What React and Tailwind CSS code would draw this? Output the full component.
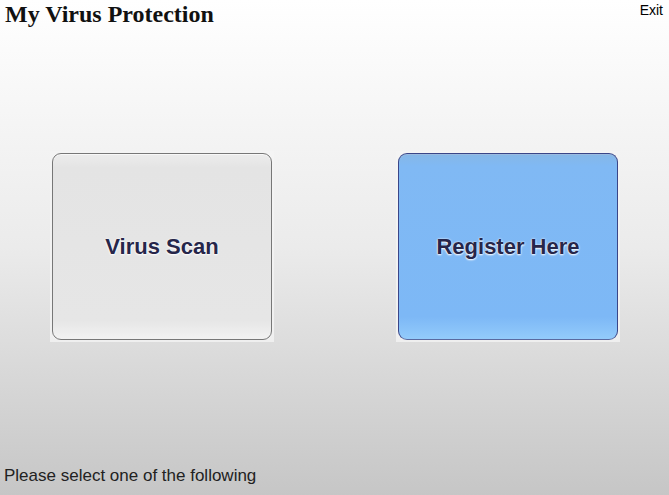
export default function App() {
    return (
        <div className="flex flex-col h-[495px] w-[669px] bg-gradient-to-b from-white via-[#ebebeb] to-[#c6c6c6] text-black overflow-hidden">
            {/* Header */}
            <header className="flex justify-between items-start">
                <h1 className="pl-[5px] text-[24px] leading-[28px] font-bold font-['Liberation_Serif',serif] text-[#111]">
                    My Virus Protection
                </h1>
                <button className="pr-[6px] pt-[2px] text-[14px] leading-[16px] font-['Liberation_Sans',Arial,sans-serif]">
                    Exit
                </button>
            </header>

            {/* Buttons */}
            <main className="flex justify-between pl-[50px] pr-[49px] mt-[123px]">
                <Tile variant="gray">Virus Scan</Tile>
                <Tile variant="blue">Register Here</Tile>
            </main>

            <footer className="mt-auto pl-[4px] pb-[9px] text-[17px] leading-[21px] text-[#222] font-['Liberation_Sans',Arial,sans-serif]">
                Please select one of the following
            </footer>
        </div>
    );
}

function Tile({ variant, children }) {
    const blue = variant === "blue";
    return (
        <div className="p-[2px] bg-[#f4f4f4]/80">
            <button
                className={`w-[220px] h-[187px] rounded-[9px] border flex items-center justify-center text-[22px] font-bold font-['Liberation_Sans',Arial,sans-serif] text-[#26264a] [text-shadow:0_0_2px_#fff,0_1px_2px_#fff] ${
                    blue
                        ? "bg-[linear-gradient(to_bottom,#86b7e6_0px,#80b9f4_12px,#7db8f6_88%,#93cbfb_100%)] border-[#3a4688] border-b-[#5a6aa0] shadow-[inset_0_1px_0_#9bbbe0]"
                        : "bg-[linear-gradient(to_bottom,#ececec_0px,#e4e4e4_14px,#e6e6e6_90%,#f2f2f2_100%)] border-[#777] shadow-[inset_0_1px_0_#f8f8f8]"
                }`}
            >
                {children}
            </button>
        </div>
    );
}
